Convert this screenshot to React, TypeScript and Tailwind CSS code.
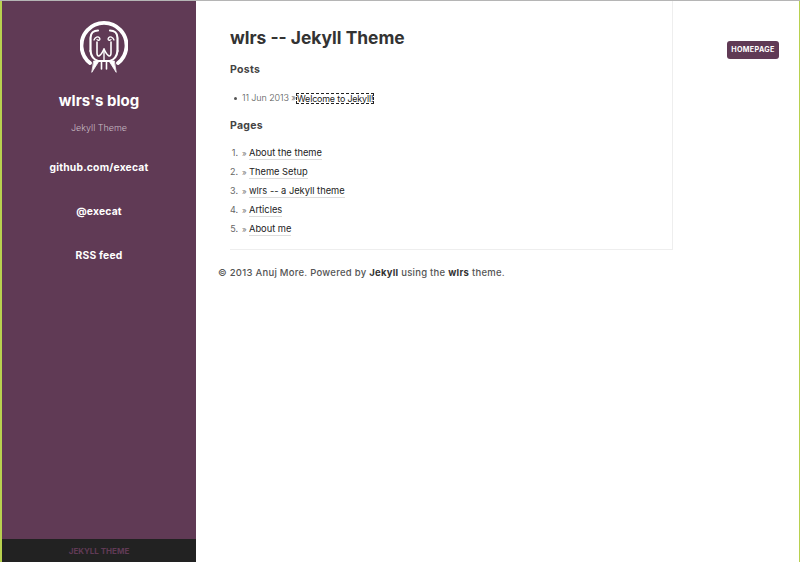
function Walrus() {
  return (
    <svg width="48" height="54" viewBox="0 0 48 54" fill="none" stroke="#ffffff" strokeLinecap="round" strokeLinejoin="round" className="ml-[10px]">
      <path d="M10 43 A22.5 22.5 0 1 1 38 43" strokeWidth="3.8" />
      <path d="M10.5 31 V18 C10.5 13 14 10.5 18 10.5" strokeWidth="2.2" />
      <path d="M37.5 31 V18 C37.5 13 34 10.5 30 10.5" strokeWidth="2.2" />
      <path d="M10.5 31 C11 36 14 39.5 18 41 H30 C34 39.5 37 36 37.5 31" strokeWidth="2.2" />
      <path d="M14 20 C15 17 18 16 19.5 18 C21 20 18 21 17 19.5" strokeWidth="1.3" />
      <path d="M34 20 C33 17 30 16 28.5 18 C27 20 30 21 31 19.5" strokeWidth="1.3" />
      <path d="M17 22 V33 C17 37 20 38 24 29 C28 38 31 37 31 33 V22" strokeWidth="1.6" />
      <path d="M24 29 V40" strokeWidth="1.4" />
      <path d="M14 41 H19 L12 52 Z" fill="#ffffff" strokeWidth="0.8" />
      <path d="M34 41 H29 L36 52 Z" fill="#ffffff" strokeWidth="0.8" />
      <path d="M21.5 41 V49 M26.5 41 V49" strokeWidth="1.6" />
    </svg>
  );
}

function SideLink({ children }: { children: string }) {
  return <a className="block text-[10.3px] leading-[14px] font-bold text-white tracking-[0.22px]">{children}</a>;
}

function PageRow({ n, label }: { n: number; label: string }) {
  return (
    <li className="flex h-[19px] items-baseline pt-[3px]">
      <span className="w-[8px] text-right leading-[12px] text-[#666]">{n}.</span>
      <span className="ml-[4px] w-[7px] text-[8px] leading-[12px] text-[#777]">»</span>
      <a className="border-b border-[#ddd] text-[9.3px] leading-[12px] text-[#222]">{label}</a>
    </li>
  );
}

export default function App() {
  return (
    <div className="flex h-[562px] w-[800px] flex-col overflow-hidden bg-white font-['Inter',sans-serif]">
      <div className="h-px bg-[#b5b5b5]" />
      <div className="flex min-h-0 flex-1 border-x border-l-2 border-l-[#b8d14f] border-r-[#b8d14f]">
        <aside className="flex w-[194px] shrink-0 flex-col bg-[#603a55] text-center">
          <div className="flex flex-1 flex-col items-center pt-[19px]">
            <Walrus />
            <h2 className="mt-[17px] text-[15px] leading-[20px] font-bold text-white">wlrs's blog</h2>
            <p className="mt-[10px] text-[9px] leading-[14px] font-light text-[#c9bcc5]">Jekyll Theme</p>
            <div className="mt-[25px] flex flex-col gap-[30px]">
              <SideLink>github.com/execat</SideLink>
              <SideLink>@execat</SideLink>
              <SideLink>RSS feed</SideLink>
            </div>
          </div>
          <div className="flex h-[23px] items-center justify-center bg-[#222222] text-[8px] font-bold text-[#603a55]">
            JEKYLL THEME
          </div>
        </aside>
        <main className="min-w-0 flex-1">
          <div className="flex">
            <div className="ml-[34px] w-[443px] border-r border-b border-[#eeeeee] pb-[10px]">
              <h1 className="pt-[26px] text-[17.4px] leading-[22px] font-bold text-[#333]">wlrs -- Jekyll Theme</h1>
              <h3 className="mt-[14px] text-[10.5px] leading-[14px] font-bold tracking-[0.3px] text-[#444]">Posts</h3>
              <ul className="mt-[14px] text-[9px] text-[#555]">
                <li className="flex h-[14px] items-center pl-[4px]">
                  <span className="mr-[5px] h-[3px] w-[3px] rounded-full bg-[#555]" />
                  <span className="font-light tracking-[-0.1px]">11 Jun 2013 »</span>
                  <a className="border border-dashed border-[#222] text-[8.9px] leading-[9px] tracking-[-0.15px] text-[#222]">Welcome to Jekyll!</a>
                </li>
              </ul>
              <h3 className="mt-[14px] text-[10.5px] leading-[14px] font-bold tracking-[0.3px] text-[#444]">Pages</h3>
              <ol className="mt-[11px] text-[9px]">
                <PageRow n={1} label="About the theme" />
                <PageRow n={2} label="Theme Setup" />
                <PageRow n={3} label="wlrs -- a Jekyll theme" />
                <PageRow n={4} label="Articles" />
                <PageRow n={5} label="About me" />
              </ol>
            </div>
            <div className="ml-[54px] pt-[40px]">
              <a className="flex h-[18px] w-[52px] items-center justify-center rounded-[3px] bg-[#603a55] text-[7.2px] font-bold tracking-[0.3px] text-white">
                HOMEPAGE
              </a>
            </div>
          </div>
          <p className="mt-[16px] ml-[22px] text-[9.5px] leading-[14px] font-medium tracking-[0.26px] text-[#555]">
            © 2013 Anuj More. Powered by <b className="font-bold text-[#333]">Jekyll</b> using the <b className="font-bold text-[#333]">wlrs</b> theme.
          </p>
        </main>
      </div>
    </div>
  );
}
